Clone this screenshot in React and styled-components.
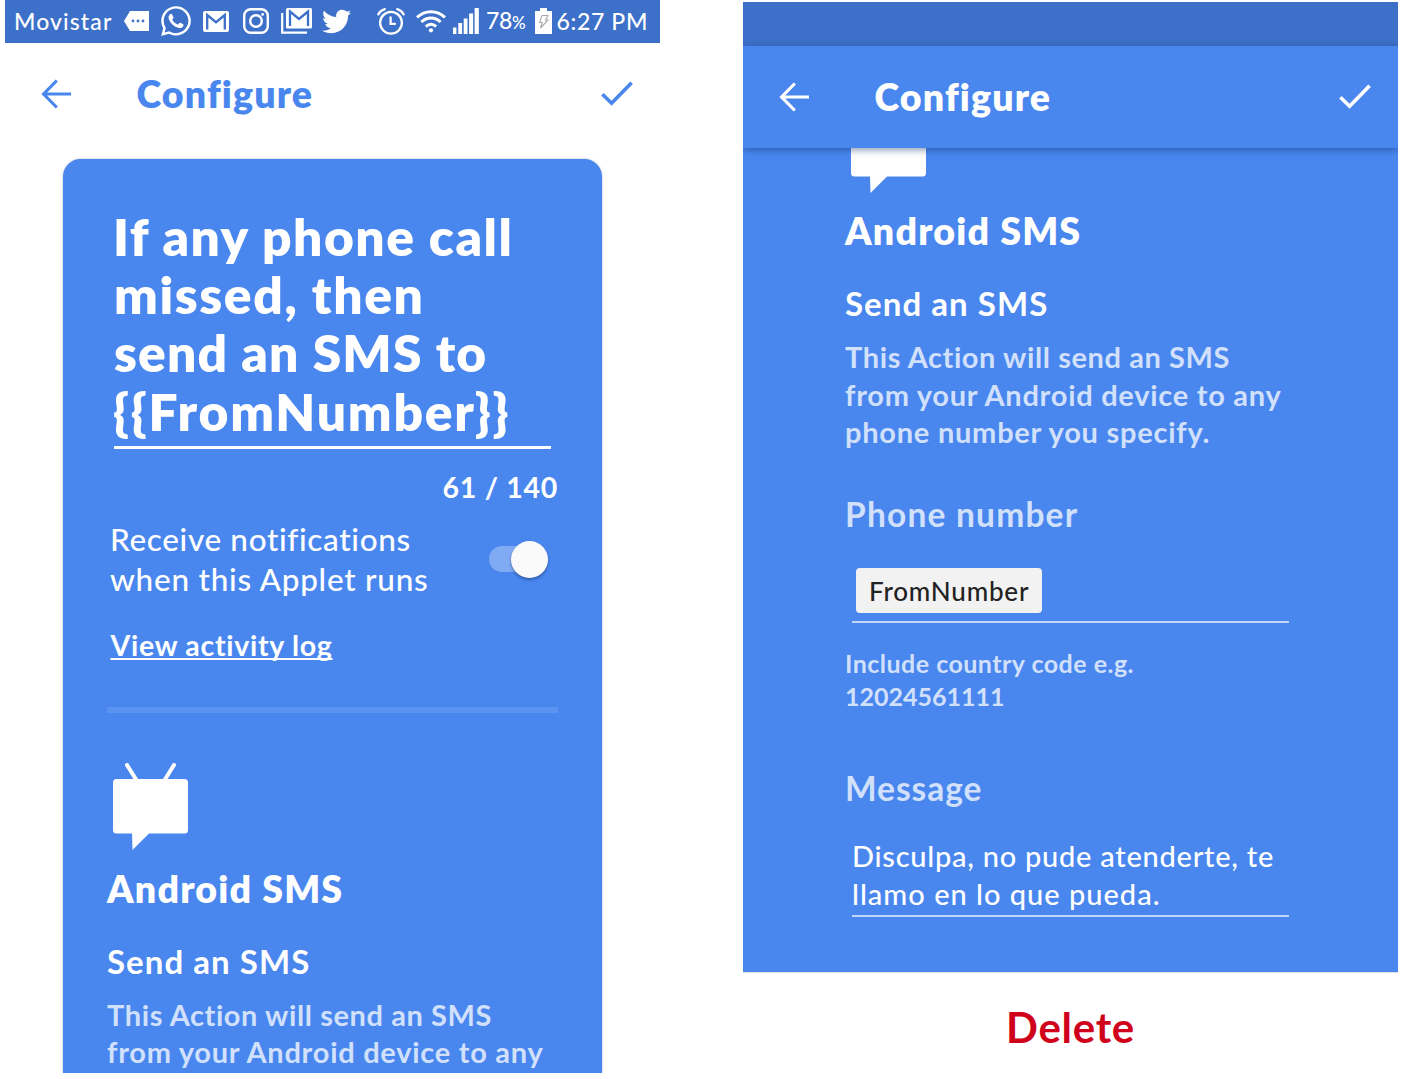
import React from "react";
import styled, { createGlobalStyle, css } from "styled-components";
import { FaTwitter, FaWhatsapp } from "react-icons/fa";

const BLUE = "#4987ef";
const DARK_BLUE = "#3d70c9";

const GlobalStyle = createGlobalStyle`
  * {
    box-sizing: border-box;
  }

  body {
    margin: 0;
    background: #fff;
    font-family: Lato, "Open Sans", sans-serif;
  }
`;

const TagIcon = () => (
  <svg width="25" height="20" viewBox="0 0 25 20">
    <path fill="currentColor" d="M6 0h19v20H6L0 10z" />
    <g fill={DARK_BLUE}>
      <circle cx="9" cy="10" r="1.4" />
      <circle cx="14" cy="10" r="1.4" />
      <circle cx="19" cy="10" r="1.4" />
    </g>
  </svg>
);

const MailIcon = () => (
  <svg width="26" height="21" viewBox="0 0 26 21">
    <rect width="26" height="21" rx="2" fill="currentColor" />
    <path
      d="M4.2 18.5V4L13 11.2L21.8 4V18.5"
      fill="none"
      stroke={DARK_BLUE}
      strokeWidth="2.3"
    />
  </svg>
);

const MailStackIcon = () => (
  <svg width="31" height="26" viewBox="0 0 31 26">
    <path d="M1.2 5V24.6H26" fill="none" stroke="currentColor" strokeWidth="2.2" />
    <rect x="5" width="26" height="20.5" rx="1.5" fill="currentColor" />
    <path
      d="M9 18V3.5L18 11L27 3.5V18"
      fill="none"
      stroke={DARK_BLUE}
      strokeWidth="2.3"
    />
  </svg>
);

const CameraIcon = () => (
  <svg width="26" height="26" viewBox="0 0 26 26" fill="none" stroke="currentColor">
    <rect x="1.2" y="1.2" width="23.6" height="23.6" rx="6.5" strokeWidth="2.4" />
    <circle cx="13" cy="13" r="5.8" strokeWidth="2.4" />
    <circle cx="19.6" cy="6.4" r="1.4" fill="currentColor" stroke="none" />
  </svg>
);

const AlarmIcon = () => (
  <svg
    width="28"
    height="27"
    viewBox="0 0 28 27"
    fill="none"
    stroke="currentColor"
    strokeWidth="2.3"
    strokeLinecap="round"
  >
    <circle cx="14" cy="14.8" r="10.9" />
    <path d="M13.6 9.5V15.8H18M1.3 6.4C2.5 4 5 2 7.8 1.2M26.7 6.4C25.5 4 23 2 20.2 1.2" />
  </svg>
);

const WifiIcon = () => (
  <svg
    width="30"
    height="23"
    viewBox="0 0 30 23"
    fill="none"
    stroke="currentColor"
    strokeWidth="3"
  >
    <path d="M1 7.4C9 -.2 21 -.2 29 7.4M5.4 12C11 6.8 19 6.8 24.6 12M9.8 16.5C13 13.7 17 13.7 20.2 16.5" />
    <circle cx="15" cy="20.3" r="2.1" fill="currentColor" stroke="none" />
  </svg>
);

const SignalIcon = () => (
  <svg width="26" height="26" viewBox="0 0 26 26" fill="currentColor">
    <rect y="19.5" width="3.4" height="6.5" />
    <rect x="5.3" y="15" width="3.8" height="11" />
    <rect x="10.7" y="10.5" width="3.8" height="15.5" />
    <rect x="16.1" y="5.5" width="4" height="20.5" />
    <rect x="21.6" width="4.2" height="26" />
  </svg>
);

const BatteryIcon = () => (
  <svg width="17" height="26" viewBox="0 0 17 26">
    <path fill="currentColor" d="M5 0h7v3h5v23H0V3h5z" />
    <path
      d="M7 7.5H13L10.5 12H13L5.5 20L7.2 14.5H4.5z"
      fill="none"
      stroke="#a9abb0"
      strokeWidth="1.1"
    />
  </svg>
);

const BackIcon = () => (
  <svg
    width="30"
    height="30"
    viewBox="0 0 30 30"
    fill="none"
    stroke="currentColor"
    strokeWidth="3.2"
  >
    <path d="M30 15H3M15.8 1.5L2.6 15L15.8 28.5" />
  </svg>
);

const CheckIcon = () => (
  <svg
    width="32"
    height="25"
    viewBox="0 0 32 25"
    fill="none"
    stroke="currentColor"
    strokeWidth="3.6"
  >
    <path d="M1.4 13.2L10.6 22.2L30.6 1.7" />
  </svg>
);

const TvBubble = () => (
  <svg width="75" height="87" viewBox="0 0 75 87" fill="#fff">
    <path
      d="M14 2L24 18M61 2L51 18"
      fill="none"
      stroke="#fff"
      strokeWidth="4"
      strokeLinecap="round"
    />
    <rect y="16" width="75" height="54.5" rx="3.5" />
    <path d="M19 70H36.5L19.5 87z" />
  </svg>
);

const tracked = css`
  letter-spacing: ${(p) => p.$track || 0}px;
  white-space: nowrap;
`;

const Screens = styled.main`
  display: flex;
  align-items: flex-start;
  gap: 83px;
  width: 1405px;
  height: 1079px;
  padding-left: 5px;
  overflow: hidden;
`;

const Phone = styled.section`
  display: flex;
  flex-direction: column;
  width: 655px;
  height: ${(p) => p.$height}px;
  margin-top: ${(p) => p.$top || 0}px;
  overflow: hidden;
`;

const StatusBar = styled.div`
  display: flex;
  align-items: center;
  flex: none;
  height: ${(p) => p.$height}px;
  background: ${DARK_BLUE};
  color: #fff;

  svg {
    flex: none;
  }
`;

const StatusItem = styled.span`
  display: flex;
  align-items: center;
  flex: none;
  width: ${(p) => p.$width}px;
  margin-left: ${(p) => p.$gap}px;
`;

const StatusText = styled.span`
  ${tracked}
  font-size: 23px;
  font-weight: 500;
  line-height: 42px;

  small {
    font-size: 17px;
  }
`;

const AppBar = styled.header`
  position: relative;
  z-index: 1;
  display: flex;
  align-items: center;
  flex: none;
  height: 102px;
  padding: 0 27px 0 36px;
  background: ${(p) => (p.$filled ? BLUE : "#fff")};
  color: ${(p) => (p.$filled ? "#fff" : BLUE)};
  box-shadow: ${(p) => (p.$filled ? "0 2px 7px rgba(20, 50, 110, 0.5)" : "none")};

  svg {
    flex: none;
  }
`;

const AppTitle = styled.h1`
  flex: 1;
  margin: 1px 0 0 65.5px;
  font-size: 37.5px;
  font-weight: 800;
  line-height: 46px;
  letter-spacing: 1.15px;
`;

const Card = styled.div`
  flex: 1;
  width: 539px;
  margin: 14.5px 58px 0;
  padding: 48px 44px 0;
  border-radius: 18px 18px 0 0;
  background: ${BLUE};
  box-shadow: 0 0 2px rgba(40, 70, 130, 0.5);
  color: #fff;
`;

const NameField = styled.div`
  margin: 0 7px 0 7px;
  padding: 0 0 6px;
  border-bottom: 3.5px solid #fff;
  font-size: 51.5px;
  font-weight: 800;
  line-height: 58.2px;
`;

const Line = styled.span`
  ${tracked}
  display: block;
  margin-left: ${(p) => p.$indent || 0}px;
`;

const Counter = styled.div`
  margin-top: 18.5px;
  font-size: 28.5px;
  font-weight: 700;
  line-height: 40px;
  letter-spacing: 0.7px;
  text-align: right;
`;

const NotifyRow = styled.div`
  display: flex;
  align-items: center;
  justify-content: space-between;
  margin-top: 12px;
  padding: 0 10px 0 3px;
  font-size: 31.5px;
  font-weight: 500;
  line-height: 40px;
`;

const Track = styled.span`
  display: flex;
  align-items: center;
  justify-content: flex-end;
  width: 59px;
  height: 26px;
  border-radius: 13px;
  background: rgba(255, 255, 255, 0.3);
`;

const Thumb = styled.span`
  flex: none;
  width: 37px;
  height: 37px;
  border-radius: 50%;
  background: #fafafa;
  box-shadow: 0 2px 3px rgba(20, 40, 90, 0.45);
`;

const LogLink = styled.a`
  display: block;
  width: 223px;
  margin: 26px 0 0 3.5px;
  font-size: 28.5px;
  font-weight: 700;
  line-height: 40px;
  letter-spacing: 0.72px;
  white-space: nowrap;
  text-decoration: underline;
  text-decoration-thickness: 2px;
  text-decoration-skip-ink: none;
  text-underline-offset: 2px;
`;

const Divider = styled.div`
  height: 6px;
  margin: 42px 0 50px;
  background: rgba(255, 255, 255, 0.1);
`;

const Service = styled.div`
  display: flex;
  flex-direction: column;
  align-items: flex-start;
  color: #fff;

  svg {
    flex: none;
    margin-left: 6px;
  }
`;

const ServiceName = styled.h2`
  margin: 15.5px 0 0;
  font-size: 37.5px;
  font-weight: 800;
  line-height: 46px;
  letter-spacing: 1.2px;
`;

const ActionName = styled.h3`
  margin: 29px 0 0;
  font-size: 33px;
  font-weight: 700;
  line-height: 40px;
  letter-spacing: 1.05px;
`;

const ActionText = styled.p`
  margin: 15px 0 0;
  color: rgba(255, 255, 255, 0.75);
  font-size: 29px;
  font-weight: 700;
  line-height: 37.5px;
`;

const ActionBody = styled.div`
  flex: none;
  height: 824px;
  padding: 0 109px 0 102px;
  overflow: hidden;
  background: ${BLUE};
  color: #fff;
`;

const Scrolled = styled.div`
  margin-top: -42px;
`;

const FieldLabel = styled.div`
  margin: ${(p) => p.$top}px 0 0;
  color: rgba(255, 255, 255, 0.75);
  font-size: 33.5px;
  font-weight: 700;
  line-height: 40px;
  letter-spacing: ${(p) => p.$track}px;
`;

const Field = styled.div`
  margin: ${(p) => p.$top}px 0 0 7px;
  padding: 0 0 ${(p) => p.$bottom}px;
  border-bottom: 2px solid rgba(255, 255, 255, 0.65);
  font-size: 29px;
  font-weight: 500;
  line-height: 37.5px;
`;

const Chip = styled.span`
  display: block;
  width: 186px;
  height: 45px;
  margin-left: 4px;
  padding-left: 13px;
  border-radius: 4px;
  background: #f2f2f2;
  color: #222;
  font-size: 26px;
  line-height: 46px;
  letter-spacing: 0.8px;
`;

const Hint = styled.p`
  margin: 24px 0 0;
  color: rgba(255, 255, 255, 0.75);
  font-size: 25px;
  font-weight: 700;
  line-height: 33px;
`;

const DeleteButton = styled.button`
  flex: 1;
  padding: 9px 0 0;
  border: 0;
  border-top: 1px solid #dcdfe6;
  background: #fff;
  color: #d0021b;
  font-family: inherit;
  font-size: 42px;
  font-weight: 700;
  line-height: 50px;
  letter-spacing: 0.7px;
`;

const AndroidSms = ({ children }) => (
  <Service>
    <TvBubble />
    <ServiceName>Android SMS</ServiceName>
    <ActionName>Send an SMS</ActionName>
    <ActionText>
      <Line $track={0.59}>This Action will send an SMS</Line>
      <Line $track={0.73}>from your Android device to any</Line>
      {children}
    </ActionText>
  </Service>
);

const Header = ({ filled }) => (
  <AppBar $filled={filled}>
    <BackIcon />
    <AppTitle>Configure</AppTitle>
    <CheckIcon />
  </AppBar>
);

const App = () => {
  return (
    <>
      <GlobalStyle />
      <Screens>
        <Phone $height={1073}>
          <StatusBar $height={42.5}>
            <StatusItem $gap={9} $width={99}>
              <StatusText $track={1.1}>Movistar</StatusText>
            </StatusItem>
            <StatusItem $gap={11} $width={25}>
              <TagIcon />
            </StatusItem>
            <StatusItem $gap={10} $width={33}>
              <FaWhatsapp size={34} />
            </StatusItem>
            <StatusItem $gap={11} $width={26}>
              <MailIcon />
            </StatusItem>
            <StatusItem $gap={14} $width={26}>
              <CameraIcon />
            </StatusItem>
            <StatusItem $gap={12} $width={31}>
              <MailStackIcon />
            </StatusItem>
            <StatusItem $gap={10} $width={29}>
              <FaTwitter size={29} />
            </StatusItem>
            <StatusItem $gap={26} $width={28}>
              <AlarmIcon />
            </StatusItem>
            <StatusItem $gap={11} $width={30}>
              <WifiIcon />
            </StatusItem>
            <StatusItem $gap={7} $width={26}>
              <SignalIcon />
            </StatusItem>
            <StatusItem $gap={7} $width={41}>
              <StatusText $track={-0.3}>
                78<small>%</small>
              </StatusText>
            </StatusItem>
            <StatusItem $gap={8} $width={17}>
              <BatteryIcon />
            </StatusItem>
            <StatusItem $gap={4.5} $width={92}>
              <StatusText $track={0.65}>6:27 PM</StatusText>
            </StatusItem>
          </StatusBar>
          <Header />
          <Card>
            <NameField>
              <Line $track={1.5} $indent={-1}>If any phone call</Line>
              <Line $track={1.6}>missed, then</Line>
              <Line $track={1.15}>send an SMS to</Line>
              <Line $track={1.8} $indent={-1}>{"{{FromNumber}}"}</Line>
            </NameField>
            <Counter>61 / 140</Counter>
            <NotifyRow>
              <div>
                <Line $track={0.65}>Receive notifications</Line>
                <Line $track={0.75}>when this Applet runs</Line>
              </div>
              <Track>
                <Thumb />
              </Track>
            </NotifyRow>
            <LogLink>View activity log</LogLink>
            <Divider />
            <AndroidSms />
          </Card>
        </Phone>

        <Phone $height={1071} $top={2}>
          <StatusBar $height={43.5} />
          <Header filled />
          <ActionBody>
            <Scrolled>
              <AndroidSms>
                <Line $track={0.75}>phone number you specify.</Line>
              </AndroidSms>
              <FieldLabel $top={43} $track={1.2}>Phone number</FieldLabel>
              <Field $top={34} $bottom={8}>
                <Chip>FromNumber</Chip>
              </Field>
              <Hint>
                <Line $track={0.48}>Include country code e.g.</Line>
                <Line>12024561111</Line>
              </Hint>
              <FieldLabel $top={55.5} $track={0.95}>Message</FieldLabel>
              <Field $top={29} $bottom={3}>
                <Line $track={0.75}>Disculpa, no pude atenderte, te</Line>
                <Line $track={1}>llamo en lo que pueda.</Line>
              </Field>
            </Scrolled>
          </ActionBody>
          <DeleteButton>Delete</DeleteButton>
        </Phone>
      </Screens>
    </>
  );
};

export default App;
